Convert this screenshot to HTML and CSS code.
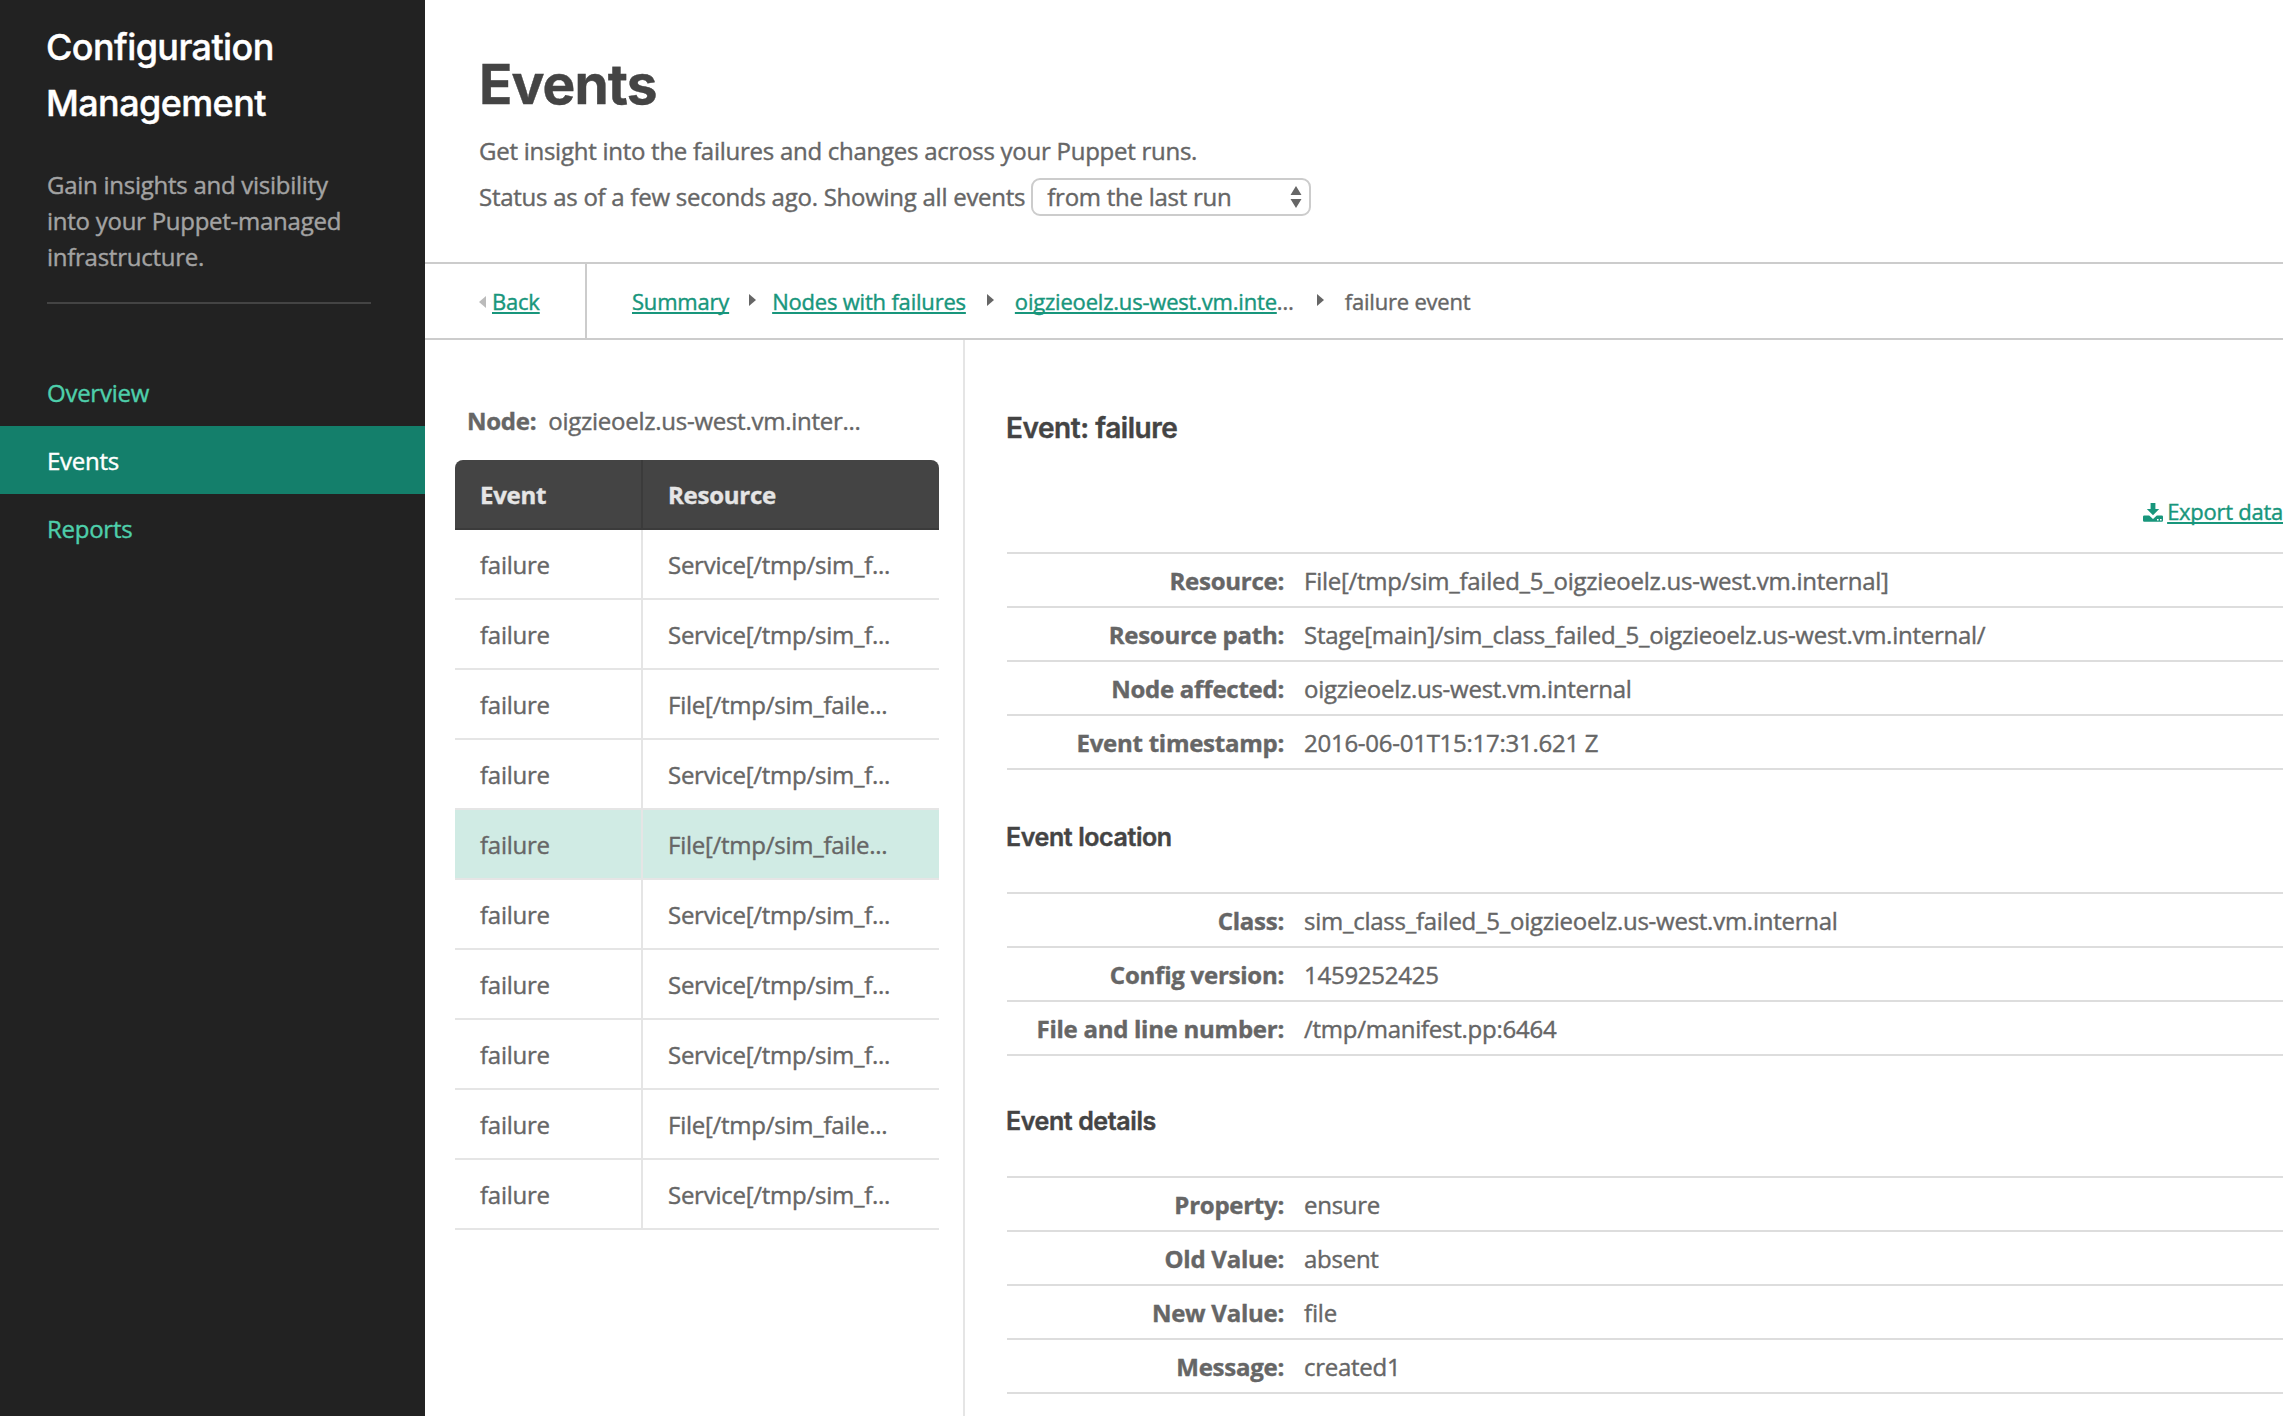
FILE: index.html
```html
<!DOCTYPE html>
<html lang="en">
<head>
<meta charset="utf-8">
<title>Events</title>
<link rel="stylesheet" href="styles.css">
</head>
<body>
<div class="app">
  <aside class="sidebar">
    <div class="sidebar-intro">
      <h2 class="sidebar-title">Configuration<br>Management</h2>
      <p class="sidebar-text">Gain insights and visibility<br>into your Puppet-managed<br>infrastructure.</p>
    </div>
    <nav class="sidebar-nav">
      <a class="nav-item">Overview</a>
      <a class="nav-item nav-item-active">Events</a>
      <a class="nav-item">Reports</a>
    </nav>
  </aside>
  <main class="main">
    <header class="page-header">
      <h1 class="page-title">Events</h1>
      <p class="page-text">Get insight into the failures and changes across your Puppet runs.</p>
      <div class="page-status"><span>Status as of a few seconds ago. Showing all events</span>
        <div class="select"><span>from the last run</span>
          <svg class="select-arrows" width="12" height="22" viewBox="0 0 12 22"><path d="M6 0l5.5 9H.5zM6 22l5.5-9H.5z"/></svg>
        </div>
      </div>
    </header>
    <nav class="breadcrumb">
      <div class="back"><svg class="tri-back" width="7" height="12" viewBox="0 0 7 12"><path d="M7 0v12L0 6z"/></svg><a class="link">Back</a></div>
      <div class="crumbs">
        <a class="link">Summary</a><svg class="tri" width="7" height="12" viewBox="0 0 7 12"><path d="M0 0v12l7-6z"/></svg>
        <a class="link">Nodes with failures</a><svg class="tri tri-wide" width="7" height="12" viewBox="0 0 7 12"><path d="M0 0v12l7-6z"/></svg>
        <div><a class="link">oigzieoelz.us-west.vm.inte</a>…</div><svg class="tri tri-last" width="7" height="12" viewBox="0 0 7 12"><path d="M0 0v12l7-6z"/></svg>
        <span>failure event</span>
      </div>
    </nav>
    <div class="content">
      <section class="list">
        <div class="list-node"><b>Node:</b><span>oigzieoelz.us-west.vm.inter...</span></div>
        <div class="table">
          <div class="row row-head"><div class="cell">Event</div><div class="cell">Resource</div></div>
          <div class="row"><div class="cell">failure</div><div class="cell">Service[/tmp/sim_f...</div></div>
          <div class="row"><div class="cell">failure</div><div class="cell">Service[/tmp/sim_f...</div></div>
          <div class="row"><div class="cell">failure</div><div class="cell">File[/tmp/sim_faile...</div></div>
          <div class="row"><div class="cell">failure</div><div class="cell">Service[/tmp/sim_f...</div></div>
          <div class="row row-selected"><div class="cell">failure</div><div class="cell">File[/tmp/sim_faile...</div></div>
          <div class="row"><div class="cell">failure</div><div class="cell">Service[/tmp/sim_f...</div></div>
          <div class="row"><div class="cell">failure</div><div class="cell">Service[/tmp/sim_f...</div></div>
          <div class="row"><div class="cell">failure</div><div class="cell">Service[/tmp/sim_f...</div></div>
          <div class="row"><div class="cell">failure</div><div class="cell">File[/tmp/sim_faile...</div></div>
          <div class="row"><div class="cell">failure</div><div class="cell">Service[/tmp/sim_f...</div></div>
        </div>
      </section>
      <section class="detail">
        <h2 class="detail-title">Event: failure</h2>
        <div class="export"><svg class="export-icon" width="20" height="19" viewBox="0 0 20 19"><path d="M7.600 0h4.800v6h3.800L10 12.200 3.800 6h3.800z"/><path fill-rule="evenodd" d="M1.200 12.500h5L10 16l3.800-3.500h5a1.200 1.200 0 0 1 1.200 1.200v3.900a1.200 1.200 0 0 1-1.200 1.200H1.200A1.200 1.200 0 0 1 0 17.600v-3.900a1.200 1.200 0 0 1 1.200-1.200zM14 15.900v1.600h1.600v-1.600zM17 15.900v1.600h1.600v-1.600z"/></svg><a class="link">Export data</a></div>
        <dl class="facts">
          <div class="fact"><dt>Resource:</dt><dd>File[/tmp/sim_failed_5_oigzieoelz.us-west.vm.internal]</dd></div>
          <div class="fact"><dt>Resource path:</dt><dd>Stage[main]/sim_class_failed_5_oigzieoelz.us-west.vm.internal/</dd></div>
          <div class="fact"><dt>Node affected:</dt><dd>oigzieoelz.us-west.vm.internal</dd></div>
          <div class="fact"><dt>Event timestamp:</dt><dd>2016-06-01T15:17:31.621 Z</dd></div>
        </dl>
        <h3 class="detail-subtitle">Event location</h3>
        <dl class="facts">
          <div class="fact"><dt>Class:</dt><dd>sim_class_failed_5_oigzieoelz.us-west.vm.internal</dd></div>
          <div class="fact"><dt>Config version:</dt><dd>1459252425</dd></div>
          <div class="fact"><dt>File and line number:</dt><dd>/tmp/manifest.pp:6464</dd></div>
        </dl>
        <h3 class="detail-subtitle detail-subtitle-tight">Event details</h3>
        <dl class="facts">
          <div class="fact"><dt>Property:</dt><dd>ensure</dd></div>
          <div class="fact"><dt>Old Value:</dt><dd>absent</dd></div>
          <div class="fact"><dt>New Value:</dt><dd>file</dd></div>
          <div class="fact"><dt>Message:</dt><dd>created1</dd></div>
        </dl>
      </section>
    </div>
  </main>
</div>
</body>
</html>
```
FILE: styles.css
```css
* { box-sizing: border-box; margin: 0; }

body {
  background: #fff;
  color: #666;
  font: 24px/36px "Open Sans", "Noto Sans", sans-serif;
  letter-spacing: -0.26px;
  font-feature-settings: "liga" 1;
  -webkit-text-stroke: 0.4px;
}

.app { display: flex; width: 2283px; height: 1416px; overflow: hidden; }

.sidebar { width: 425px; background: #222; flex: none; }
.sidebar-intro { margin: 0 54px 0 47px; height: 304px; padding-top: 19px; border-bottom: 2px solid #444; }
.sidebar-title { margin-left: -1px; color: #fff; font: 500 36px/56px Inter, sans-serif; letter-spacing: -0.6px; }
.sidebar-text { margin-top: 36px; color: #a3a3a3; }
.sidebar-nav { padding-top: 54px; }
.nav-item { display: block; padding: 17px 47px 15px; color: #4ecfab; }
.nav-item-active { background: #147f6b; color: #fff; }

.main { flex: 1; display: flex; flex-direction: column; min-width: 0; }

.page-header { height: 264px; padding: 48px 0 0 54px; border-bottom: 2px solid #ccc; }
.page-title { color: #444; font: 700 55px/72px Inter, sans-serif; letter-spacing: -0.9px; }
.page-text { margin-top: 13px; }
.page-status { display: flex; align-items: center; gap: 6px; margin-top: 8px; height: 40px; }
.select { display: flex; align-items: center; justify-content: space-between; width: 280px; height: 38px; padding: 0 7px 0 14px; border: 2px solid #ccc; border-radius: 9px; }
.select-arrows { fill: #666; }

.breadcrumb { display: flex; height: 76px; border-bottom: 2px solid #ccc; font-size: 22px; letter-spacing: -0.2px; flex: none; }
.back { display: flex; align-items: center; width: 162px; padding-left: 54px; gap: 6px; border-right: 2px solid #ccc; }
.tri-back { fill: #bbb; margin-top: 2px; }
.crumbs { display: flex; align-items: center; padding-left: 45px; }
.tri { fill: #666; margin: 0 16px 2px 20px; }
.tri-wide { margin: 0 21px 2px; }
.tri-last { margin: 0 21px 2px 23px; }
.link { color: #18967c; text-decoration: underline; text-decoration-thickness: 2px; text-underline-offset: 2px; text-decoration-skip-ink: none; }

.content { flex: 1; display: flex; }

.list { width: 540px; padding: 63px 24px 0 30px; border-right: 2px solid #e5e5e5; flex: none; }
.list-node { display: flex; gap: 12px; height: 57px; padding-left: 12px; }
.row { display: flex; height: 70px; border-bottom: 2px solid #e5e5e5; }
.cell { display: flex; align-items: center; padding: 2px 0 0 25px; }
.cell:first-child { width: 188px; border-right: 2px solid #e5e5e5; }
.row-head { background: #444; color: #e5e5e5; font-weight: 700; border-radius: 8px 8px 0 0; border-bottom-color: #3b3b3b; }
.row-head .cell:first-child { border-right-color: #3b3b3b; }
.row-selected { background: #d0ebe4; }

.detail { flex: 1; padding: 70px 0 0 42px; }
.detail-title { margin-left: -1px; color: #444; font: 600 28px/36px Inter, sans-serif; letter-spacing: -0.45px; }
.export { display: flex; align-items: center; justify-content: flex-end; gap: 4px; margin: 47px 0 23px; font-size: 22px; }
.export-icon { fill: #18967c; margin-top: 2px; }
.facts { border-top: 2px solid #ddd; }
.fact { display: flex; align-items: center; gap: 20px; height: 54px; padding-top: 2px; border-bottom: 2px solid #ddd; }
.fact dt { width: 277px; text-align: right; font-weight: 700; }
.detail-subtitle { margin-left: -1px; padding: 49px 0 37px; color: #444; font: 600 25px/36px Inter, sans-serif; letter-spacing: -0.4px; }
.detail-subtitle-tight { padding-top: 47px; }
```
